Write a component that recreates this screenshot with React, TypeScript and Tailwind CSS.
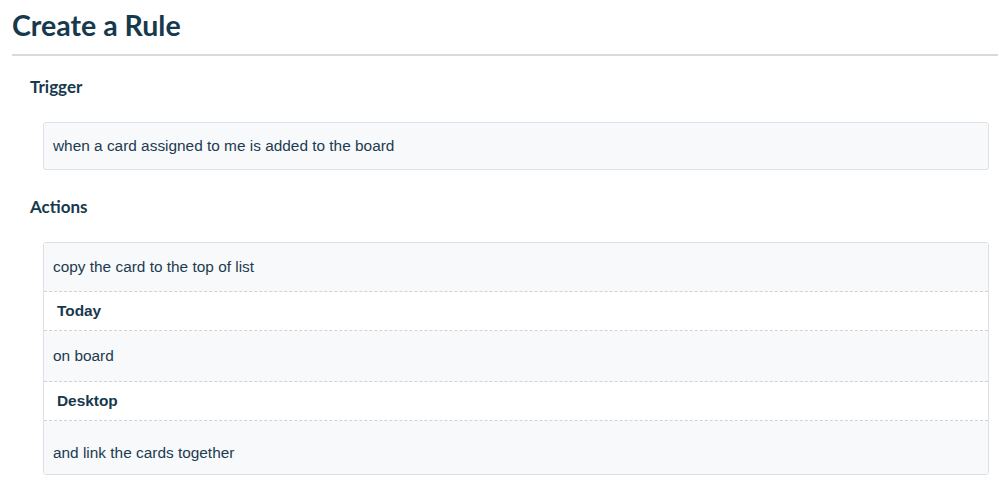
export default function App() {
  return (
    <div className="w-[999px] h-[502px] bg-white text-[#1c3b50] overflow-hidden">
      <div className="pl-3 pr-[1px] pt-[7px]">
        <h1 className="font-['Lato',sans-serif] font-bold text-[28.5px] leading-[36px] text-[#17394d]">
          Create a Rule
        </h1>
        <div className="mt-[11px] h-[2px] bg-[#dadada]" />
      </div>

      {/* trigger */}
      <div className="pl-[30px] pt-[20px]">
        <h2 className="font-['Lato',sans-serif] font-bold text-[17px] leading-[22px] text-[#17394d]">
          Trigger
        </h2>
      </div>
      <div className="ml-[43px] w-[946px] mt-[24px] border border-[#dfe2e6] rounded-[3px] bg-[#f8f9fb] h-[48px] flex items-center px-[9px] font-['Liberation_Sans',Arial,sans-serif] text-[15.4px]">
        when a card assigned to me is added to the board
      </div>

      {/* actions */}
      <div className="pl-[30px] pt-[26px]">
        <h2 className="font-['Lato',sans-serif] font-bold text-[17px] leading-[22px] text-[#17394d]">
          Actions
        </h2>
      </div>
      <div className="ml-[43px] w-[946px] mt-[24px] border border-[#dcdfe3] rounded-[3px] overflow-hidden font-['Liberation_Sans',Arial,sans-serif] text-[15.4px]">
        <div className="h-[49px] bg-[#f8f9fb] flex items-center px-[9px] border-b border-dashed border-[#cfd3d8]">
          copy the card to the top of list
        </div>
        <div className="h-[39px] bg-white flex items-center px-[13px] font-bold text-[#17394d] border-b border-dashed border-[#cfd3d8]">
          Today
        </div>
        <div className="h-[51px] bg-[#f8f9fb] flex items-center px-[9px] border-b border-dashed border-[#cfd3d8]">
          on board
        </div>
        <div className="h-[39px] bg-white flex items-center px-[13px] font-bold text-[#17394d] border-b border-dashed border-[#cfd3d8]">
          Desktop
        </div>
        <div className="h-[53px] bg-[#f8f9fb] flex items-end pb-[10px] px-[9px]">
          and link the cards together
        </div>
      </div>
    </div>
  );
}
